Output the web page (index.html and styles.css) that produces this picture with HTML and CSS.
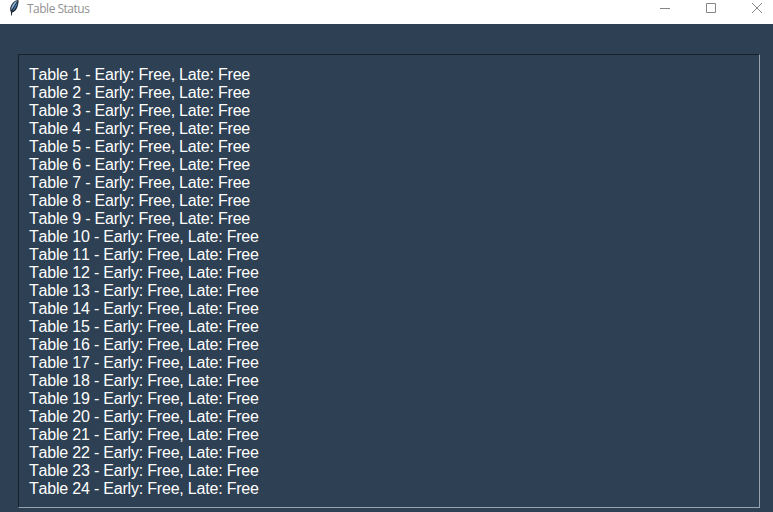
FILE: index.html
```
<!DOCTYPE html>
<html lang="en">
<head>
<meta charset="utf-8">
<title>Table Status</title>
<link rel="stylesheet" href="styles.css">
</head>
<body>
<header class="titlebar">
  <svg class="feather" width="12" height="17" viewBox="0 0 12 17">
    <path d="M10.4 0C7 0.2 4 3 2.5 7C2 8.8 2 10.6 2.9 12L3.2 15.6H4L4.2 12.4C6.6 12 8.6 9.6 9.6 6.4C10.4 4 10.8 1.6 10.4 0Z" fill="#1d2530"/>
    <path d="M9.2 0.8C6.8 1.4 4.4 4.6 3.5 7.4L3.2 10.4C5 7.6 7.4 4.2 9.2 0.8Z" fill="#8db9e0"/>
    <path d="M9.5 1.8C7.8 4.8 5.8 8 4.2 11.2C6.8 9.8 9.3 6 9.5 1.8Z" fill="#4a80b8"/>
  </svg>
  <h1 class="title">Table Status</h1>
  <div class="controls">
    <svg width="12" height="12" viewBox="0 0 12 12"><path d="M1 6.5H11"/></svg>
    <svg width="12" height="12" viewBox="0 0 12 12"><path d="M1.5 1.5H10.5V10.5H1.5Z"/></svg>
    <svg width="12" height="12" viewBox="0 0 12 12"><path d="M1 1L11 11M11 1L1 11"/></svg>
  </div>
</header>
<main class="content">
  <ul class="tables">
    <li>Table 1 - Early: Free, Late: Free</li>
    <li>Table 2 - Early: Free, Late: Free</li>
    <li>Table 3 - Early: Free, Late: Free</li>
    <li>Table 4 - Early: Free, Late: Free</li>
    <li>Table 5 - Early: Free, Late: Free</li>
    <li>Table 6 - Early: Free, Late: Free</li>
    <li>Table 7 - Early: Free, Late: Free</li>
    <li>Table 8 - Early: Free, Late: Free</li>
    <li>Table 9 - Early: Free, Late: Free</li>
    <li>Table 10 - Early: Free, Late: Free</li>
    <li>Table 11 - Early: Free, Late: Free</li>
    <li>Table 12 - Early: Free, Late: Free</li>
    <li>Table 13 - Early: Free, Late: Free</li>
    <li>Table 14 - Early: Free, Late: Free</li>
    <li>Table 15 - Early: Free, Late: Free</li>
    <li>Table 16 - Early: Free, Late: Free</li>
    <li>Table 17 - Early: Free, Late: Free</li>
    <li>Table 18 - Early: Free, Late: Free</li>
    <li>Table 19 - Early: Free, Late: Free</li>
    <li>Table 20 - Early: Free, Late: Free</li>
    <li>Table 21 - Early: Free, Late: Free</li>
    <li>Table 22 - Early: Free, Late: Free</li>
    <li>Table 23 - Early: Free, Late: Free</li>
    <li>Table 24 - Early: Free, Late: Free</li>
  </ul>
</main>
</body>
</html>
```
FILE: styles.css
```
* {
  box-sizing: border-box;
}

body {
  margin: 0;
  height: 512px;
  overflow: hidden;
  display: flex;
  flex-direction: column;
  background: #2e4053;
}

.titlebar {
  flex: none;
  height: 24px;
  padding: 0 10px 0 8px;
  display: flex;
  align-items: flex-start;
  background: #fff;
}

.title {
  margin: 1px 0 0 7px;
  font: 12px/16px "Open Sans", "Noto Sans", sans-serif;
  letter-spacing: -0.5px;
  color: #929292;
}

.controls {
  margin: 2px 0 0 auto;
  display: flex;
  gap: 34px;
}

.controls svg {
  fill: none;
  stroke: #858585;
  stroke-width: 1;
}

.content {
  flex: 1;
  padding: 30px 13px 4px 18px;
}

.tables {
  margin: 0;
  height: 454px;
  padding: 11px 10px;
  list-style: none;
  border: 1px solid;
  border-color: #17222f #97a2ae #97a2ae #17222f;
  font: 16px/18px "Liberation Sans", Arial, sans-serif;
  font-kerning: none;
  letter-spacing: -0.2px;
  color: #fff;
  white-space: nowrap;
}
```
